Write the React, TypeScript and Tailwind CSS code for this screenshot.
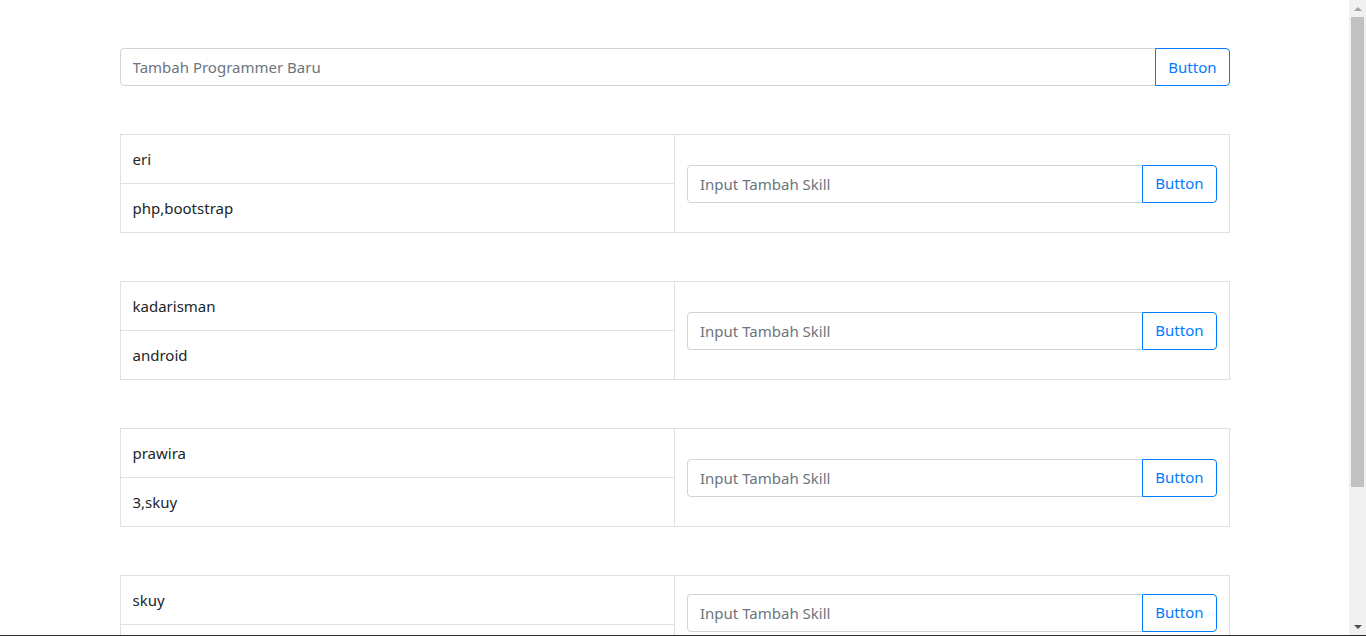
const programmers = [
  { name: "eri", skills: "php,bootstrap" },
  { name: "kadarisman", skills: "android" },
  { name: "prawira", skills: "3,skuy" },
  { name: "skuy", skills: "" },
];

const InputGroup = ({ placeholder }: { placeholder: string }) => (
  <div className="flex w-full">
    <input
      type="text"
      placeholder={placeholder}
      className="h-[38px] flex-1 min-w-0 rounded-l-[4px] border border-[#ced4da] bg-white px-3 text-[15px] text-[#495057] placeholder:text-[#6c757d] outline-none"
    />
    <button className="-ml-px h-[38px] rounded-r-[4px] border border-[#007bff] bg-white px-3 text-[15px] text-[#007bff]">
      Button
    </button>
  </div>
);

export default function App() {
  return (
    <div
      className="flex h-[636px] flex-col overflow-hidden bg-white text-[#212529]"
      style={{ fontFamily: '"Noto Sans", "Open Sans", sans-serif' }}
    >
      <div className="flex min-h-0 flex-1">
        <div className="min-w-0 flex-1 overflow-hidden">
          <div className="mx-auto w-full max-w-[1140px] px-[15px] pt-12">
            <InputGroup placeholder="Tambah Programmer Baru" />
            <div className="mt-12 flex flex-col gap-12">
              {programmers.map((p) => (
                <table
                  key={p.name}
                  className="w-full table-fixed border-collapse border border-[#dee2e6] text-[15px]"
                >
                  <tbody>
                    <tr>
                      <td className="h-[49px] border border-[#dee2e6] px-3 py-3 leading-6">
                        {p.name}
                      </td>
                      <td
                        rowSpan={2}
                        className="border border-[#dee2e6] px-3 py-3 align-middle"
                      >
                        <InputGroup placeholder="Input Tambah Skill" />
                      </td>
                    </tr>
                    <tr>
                      <td className="border border-[#dee2e6] px-3 py-3 leading-6">
                        {p.skills}
                      </td>
                    </tr>
                  </tbody>
                </table>
              ))}
            </div>
          </div>
        </div>
        {/* scrollbar */}
        <div className="flex w-[17px] flex-col items-center bg-[#f1f1f1]">
          <div className="flex h-[17px] w-full items-center justify-center">
            <div className="h-0 w-0 border-x-[4px] border-b-[4px] border-x-transparent border-b-[#a3a3a3]" />
          </div>
          <div className="h-[470px] w-[13px] bg-[#c1c1c1]" />
          <div className="flex-1" />
          <div className="flex h-[17px] w-full items-center justify-center">
            <div className="h-0 w-0 border-x-[4px] border-t-[4px] border-x-transparent border-t-[#505050]" />
          </div>
        </div>
      </div>
      <div className="h-px bg-[#2b2b2b]" />
    </div>
  );
}
